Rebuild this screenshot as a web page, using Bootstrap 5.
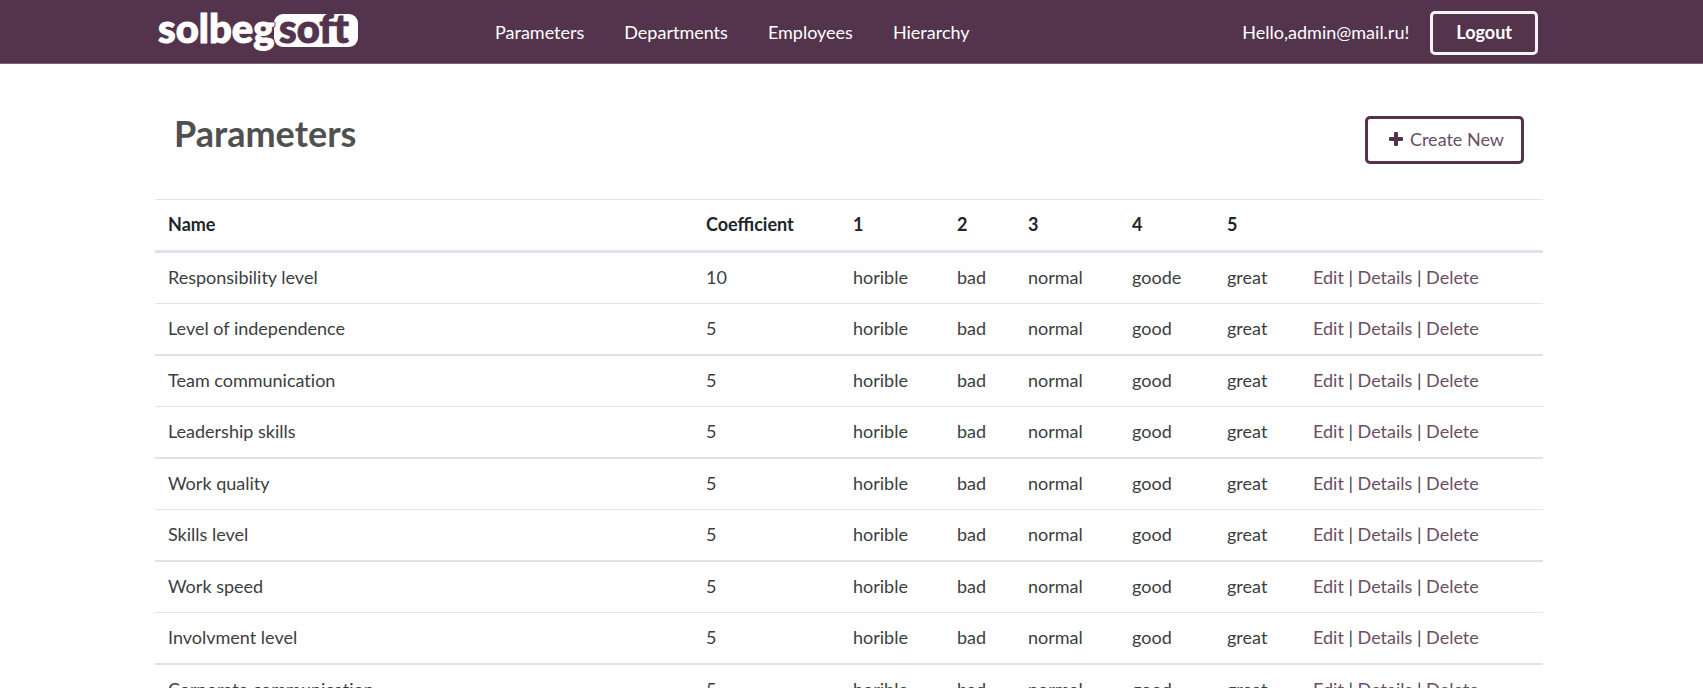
<!DOCTYPE html>
<html lang="en">
<head>
<meta charset="utf-8">
<meta name="viewport" content="width=device-width, initial-scale=1">
<title>Parameters - solbegsoft</title>
<link href="https://cdn.jsdelivr.net/npm/bootstrap@5.3.0/dist/css/bootstrap.min.css" rel="stylesheet">
<style>
:root { --plum: #54344d; }
body { font-family: Lato, "Liberation Sans", sans-serif; font-size: 18px; line-height: 26px; color: #3b3e41; overflow-x: hidden; }
.page-width { max-width: 1388px; margin-left: auto; margin-right: auto; }
.gutter { padding-right: 5px; }
.topbar { background: var(--plum); border-bottom: 1px solid #7c6377; }
.topbar-row { min-height: 63px; }
.brand-link { width: 320px; }
.brand-link svg, .params tbody { font-variant-ligatures: none; }
.topbar .navbar-nav .nav-link { color: #fff; padding: 0 20px; }
.btn-logout { border: 3px solid #f6f3f5; border-radius: 5px; color: #fff; font-size: 18px; font-weight: 700; line-height: 26px; padding: 5px 23px 7px; margin: 2px 5px 0 21px; }
.btn-logout:hover { background: #fff; color: var(--plum); }
.title-row { padding: 52px 19px 35px 19px; }
.title-row h1 { font-size: 36px; line-height: 34px; font-weight: 700; color: #505050; margin: 0; }
.btn-create { border: 3px solid var(--plum); border-radius: 5px; color: #6b4d64; font-size: 18px; line-height: 26px; padding: 7px 17px 9px 20px; gap: 6px; }
.btn-create:hover { background: var(--plum); color: #fff; }
.params { --bs-table-color: #3b3e41; table-layout: fixed; border-collapse: separate; border-spacing: 0; border-top: 1px solid #e3e5e7; min-width: 1100px; }
.params > :not(caption) > * > * { padding: 11px 14px 13px 13px; border-bottom: 1px solid #e2e6e9; }
.params > thead > tr > th { border-bottom: 3px solid #e0e1ea; color: #212529; font-weight: 700; }
.params > tbody > tr:nth-child(even) > td { border-bottom: 2px solid #dee2e6; }
.params a { color: #6b4d64; text-decoration: none; }
.params a:hover { text-decoration: underline; }
.c-coef { width: 147px; } .c-wide { width: 104px; } .c-two { width: 71px; }
.c-four { width: 95px; } .c-five { width: 86px; } .c-act { width: 243px; }
</style>
</head>
<body>
<header class="topbar">
  <div class="gutter">
  <nav class="navbar navbar-expand p-0 page-width topbar-row" aria-label="Main">
    <a class="brand-link flex-shrink-0" href="#" aria-label="solbegsoft home">
      <svg class="d-block" width="210" height="60" viewBox="0 0 210 60" font-family="Lato, sans-serif" font-weight="900" font-size="40">
        <rect x="119" y="12" width="84" height="33" rx="9" fill="#fff"/>
        <text x="3" y="41" fill="#54344d" stroke="#54344d" stroke-width="3" stroke-linejoin="round">solbeg</text>
        <text x="3" y="41" fill="#fff" stroke="#fff" stroke-width="1">solbeg</text>
        <text x="124" y="41" fill="#54344d" stroke="#54344d" stroke-width="1">soft</text>
      </svg>
    </a>
    <ul class="navbar-nav">
      <li class="nav-item"><a class="nav-link" href="#">Parameters</a></li>
      <li class="nav-item"><a class="nav-link" href="#">Departments</a></li>
      <li class="nav-item"><a class="nav-link" href="#">Employees</a></li>
      <li class="nav-item"><a class="nav-link" href="#">Hierarchy</a></li>
    </ul>
    <span class="ms-auto text-white">Hello,admin@mail.ru!</span>
    <button class="btn btn-logout" type="button">Logout</button>
  </nav>
  </div>
</header>
<main class="gutter">
  <div class="page-width">
    <div class="title-row d-flex justify-content-between align-items-start">
      <h1>Parameters</h1>
      <button class="btn btn-create d-flex align-items-center" type="button">
        <svg width="16" height="16" viewBox="0 0 16 16" fill="#54344d" aria-hidden="true"><path d="M7 1h2q1 0 1 1v4h4q1 0 1 1v2q0 1-1 1h-4v4q0 1-1 1H7q-1 0-1-1v-4H2q-1 0-1-1V7q0-1 1-1h4V2q0-1 1-1z"/></svg>
        Create New
      </button>
    </div>
    <table class="table params mb-0">
      <colgroup><col><col class="c-coef"><col class="c-wide"><col class="c-two"><col class="c-wide"><col class="c-four"><col class="c-five"><col class="c-act"></colgroup>
      <thead><tr><th scope="col">Name</th><th scope="col">Coefficient</th><th scope="col">1</th><th scope="col">2</th><th scope="col">3</th><th scope="col">4</th><th scope="col">5</th><th></th></tr></thead>
      <tbody>
        <tr><td>Responsibility level</td><td>10</td><td>horible</td><td>bad</td><td>normal</td><td>goode</td><td>great</td><td><a href="#">Edit</a> | <a href="#">Details</a> | <a href="#">Delete</a></td></tr>
        <tr><td>Level of independence</td><td>5</td><td>horible</td><td>bad</td><td>normal</td><td>good</td><td>great</td><td><a href="#">Edit</a> | <a href="#">Details</a> | <a href="#">Delete</a></td></tr>
        <tr><td>Team communication</td><td>5</td><td>horible</td><td>bad</td><td>normal</td><td>good</td><td>great</td><td><a href="#">Edit</a> | <a href="#">Details</a> | <a href="#">Delete</a></td></tr>
        <tr><td>Leadership skills</td><td>5</td><td>horible</td><td>bad</td><td>normal</td><td>good</td><td>great</td><td><a href="#">Edit</a> | <a href="#">Details</a> | <a href="#">Delete</a></td></tr>
        <tr><td>Work quality</td><td>5</td><td>horible</td><td>bad</td><td>normal</td><td>good</td><td>great</td><td><a href="#">Edit</a> | <a href="#">Details</a> | <a href="#">Delete</a></td></tr>
        <tr><td>Skills level</td><td>5</td><td>horible</td><td>bad</td><td>normal</td><td>good</td><td>great</td><td><a href="#">Edit</a> | <a href="#">Details</a> | <a href="#">Delete</a></td></tr>
        <tr><td>Work speed</td><td>5</td><td>horible</td><td>bad</td><td>normal</td><td>good</td><td>great</td><td><a href="#">Edit</a> | <a href="#">Details</a> | <a href="#">Delete</a></td></tr>
        <tr><td>Involvment level</td><td>5</td><td>horible</td><td>bad</td><td>normal</td><td>good</td><td>great</td><td><a href="#">Edit</a> | <a href="#">Details</a> | <a href="#">Delete</a></td></tr>
        <tr><td>Corporate communication</td><td>5</td><td>horible</td><td>bad</td><td>normal</td><td>good</td><td>great</td><td><a href="#">Edit</a> | <a href="#">Details</a> | <a href="#">Delete</a></td></tr>
      </tbody>
    </table>
  </div>
</main>
<script src="https://cdn.jsdelivr.net/npm/bootstrap@5.3.0/dist/js/bootstrap.bundle.min.js"></script>
</body>
</html>
